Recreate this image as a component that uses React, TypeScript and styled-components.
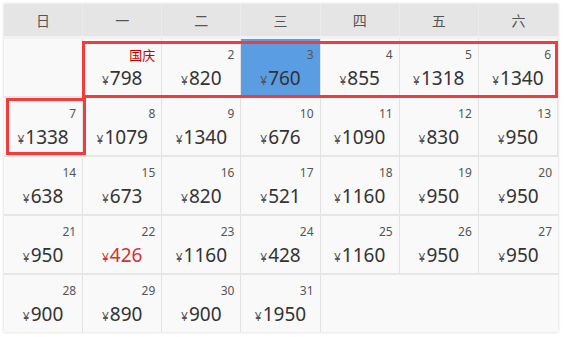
import styled, { createGlobalStyle } from 'styled-components';

const GlobalStyle = createGlobalStyle`
  html, body {
    margin: 0;
    padding: 0;
    background: #ffffff;
  }
  body {
    font-family: "Noto Sans", "Noto Sans CJK SC", sans-serif;
  }
`;

const Page = styled.div`
  padding: 4px 6px 4px 4px;
`;

const Calendar = styled.div`
  width: 554px;
  background: #f9f9f9;
  box-shadow: 0 0 3px rgba(0, 0, 0, 0.18);
`;

const HeadRow = styled.div`
  display: grid;
  grid-template-columns: repeat(7, 1fr);
  height: 32px;
  background: #e5e5e5;
  border-bottom: 3px solid #f2f2f2;
`;

const HeadCell = styled.div`
  display: flex;
  align-items: center;
  justify-content: center;
  font-size: 14px;
  color: #555;
  border-right: 1px solid #ebebeb;

  &:last-child {
    border-right: none;
  }
`;

const Week = styled.div`
  display: grid;
  grid-template-columns: repeat(7, 1fr);
  border-bottom: 2px solid #e6e6e6;

  &:last-child {
    border-bottom: none;
  }
`;

const Cell = styled.div<{ $col: number; $selected?: boolean; $blank?: boolean }>`
  grid-row: 1;
  grid-column: ${(p) => p.$col + 1};
  display: flex;
  flex-direction: column;
  height: 57px;
  box-sizing: border-box;
  padding: 8px 6px 0;
  background: ${(p) => (p.$selected ? '#5a9de2' : 'transparent')};
  border-right: ${(p) => (p.$blank ? 'none' : '1px solid #e3e3e3')};

  &:last-child {
    border-right: none;
  }
`;

const DayNum = styled.div<{ $holiday?: boolean }>`
  text-align: right;
  font-size: ${(p) => (p.$holiday ? '13px' : '12px')};
  line-height: 16px;
  height: 16px;
  color: ${(p) => (p.$holiday ? '#c00000' : '#555')};
`;

const Price = styled.div<{ $low?: boolean }>`
  margin-top: 3px;
  text-align: center;
  font-size: 19px;
  line-height: 24px;
  color: ${(p) => (p.$low ? '#d63030' : '#333')};

  span {
    font-size: 12px;
    margin-right: 1px;
    color: ${(p) => (p.$low ? '#d63030' : '#555')};
  }
`;

const Mark = styled.div<{ $from: number; $to: number; $inset?: boolean }>`
  grid-row: 1;
  grid-column: ${(p) => `${p.$from + 1} / ${p.$to + 2}`};
  box-sizing: border-box;
  border: 3px solid #f23b3b;
  margin: ${(p) => (p.$inset ? '0 -3px 0 2px' : '2px 0 -2px -1px')};
  pointer-events: none;
`;

type Day = { day: number; price: number; holiday?: string; low?: boolean };

const heads = ['日', '一', '二', '三', '四', '五', '六'];

const weeks: (Day | null)[][] = [
  [
    null,
    { day: 1, price: 798, holiday: '国庆' },
    { day: 2, price: 820 },
    { day: 3, price: 760 },
    { day: 4, price: 855 },
    { day: 5, price: 1318 },
    { day: 6, price: 1340 },
  ],
  [
    { day: 7, price: 1338 },
    { day: 8, price: 1079 },
    { day: 9, price: 1340 },
    { day: 10, price: 676 },
    { day: 11, price: 1090 },
    { day: 12, price: 830 },
    { day: 13, price: 950 },
  ],
  [
    { day: 14, price: 638 },
    { day: 15, price: 673 },
    { day: 16, price: 820 },
    { day: 17, price: 521 },
    { day: 18, price: 1160 },
    { day: 19, price: 950 },
    { day: 20, price: 950 },
  ],
  [
    { day: 21, price: 950 },
    { day: 22, price: 426, low: true },
    { day: 23, price: 1160 },
    { day: 24, price: 428 },
    { day: 25, price: 1160 },
    { day: 26, price: 950 },
    { day: 27, price: 950 },
  ],
  [
    { day: 28, price: 900 },
    { day: 29, price: 890 },
    { day: 30, price: 900 },
    { day: 31, price: 1950 },
    null,
    null,
    null,
  ],
];

// red frames around the holiday stretch
const marks: Record<number, { from: number; to: number; inset?: boolean }> = {
  0: { from: 1, to: 6 },
  1: { from: 0, to: 0, inset: true },
};

const selectedDay = 3;

export default function App() {
  return (
    <Page>
      <GlobalStyle />
      <Calendar>
        <HeadRow>
          {heads.map((h) => (
            <HeadCell key={h}>{h}</HeadCell>
          ))}
        </HeadRow>
        {weeks.map((week, wi) => {
          const lastWeek = wi === weeks.length - 1;
          return (
            <Week key={wi}>
              {week.map((d, i) => (
                <Cell
                  key={i}
                  $col={i}
                  $selected={d?.day === selectedDay}
                  $blank={!d && lastWeek}
                >
                  {d && (
                    <>
                      <DayNum $holiday={!!d.holiday}>{d.holiday ?? d.day}</DayNum>
                      <Price $low={d.low}>
                        <span>¥</span>
                        {d.price}
                      </Price>
                    </>
                  )}
                </Cell>
              ))}
              {marks[wi] && (
                <Mark $from={marks[wi].from} $to={marks[wi].to} $inset={marks[wi].inset} />
              )}
            </Week>
          );
        })}
      </Calendar>
    </Page>
  );
}
